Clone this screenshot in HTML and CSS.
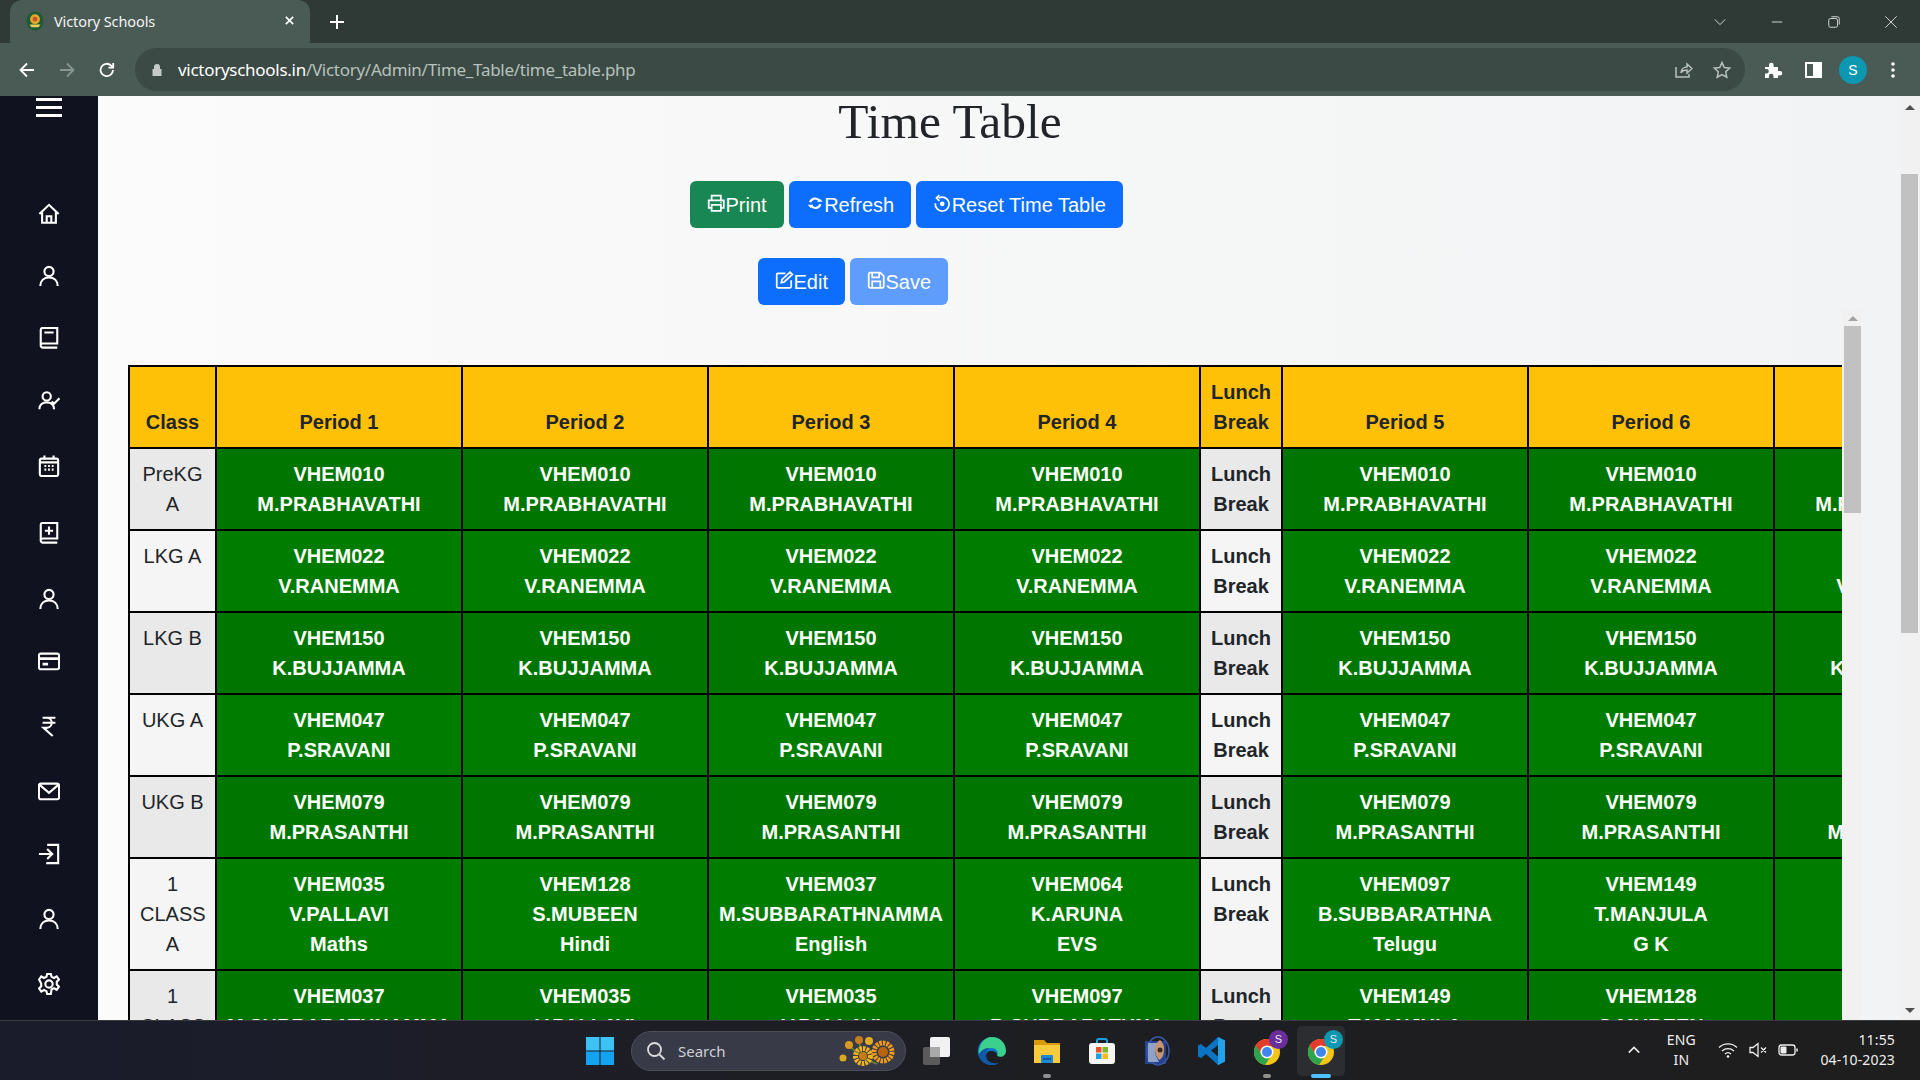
FILE: index.html
```html
<!DOCTYPE html>
<html lang="en">
<head>
    <meta charset="UTF-8">
    <title>Victory Schools</title>
    <link rel="stylesheet" href="styles.css">
</head>
<body>
    <!-- browser tabs -->
    <div class="tabstrip">
        <div class="tab">
            <svg class="favicon" viewBox="0 0 20 22"><ellipse cx="10" cy="11" rx="9.5" ry="10.5" fill="#1d5a36"/><circle cx="10" cy="9" r="5.5" fill="#e2a62c"/><circle cx="10" cy="9" r="2.6" fill="#c9532c"/><path d="M4 15h12l-2 3H6z" fill="#e8d25a"/></svg>
            <span class="tab-title">Victory Schools</span>
            <svg class="tab-close" viewBox="0 0 12 12"><path d="M2 2l8 8M10 2l-8 8"/></svg>
        </div>
        <svg class="new-tab" viewBox="0 0 16 16"><path d="M8 1v14M1 8h14"/></svg>
        <div class="win-controls">
            <svg viewBox="0 0 16 16"><path d="M2 5l6 6 6-6"/></svg>
            <svg viewBox="0 0 16 16"><path d="M2 8h12"/></svg>
            <svg viewBox="0 0 16 16"><rect x="2" y="4" width="10" height="10" rx="2"/><path d="M5 2h7a2 2 0 0 1 2 2v7"/></svg>
            <svg viewBox="0 0 16 16"><path d="M1.500 1.500l13 13M14.500 1.500l-13 13"/></svg>
        </div>
    </div>

    <!-- address bar -->
    <div class="toolbar">
        <svg class="tool-icon" viewBox="0 0 20 20"><path d="M17 10H4M10 3.500L3.500 10l6.500 6.500"/></svg>
        <svg class="tool-icon dim" viewBox="0 0 20 20"><path d="M3 10h13M10 3.500l6.500 6.500-6.500 6.500"/></svg>
        <svg class="tool-icon" viewBox="0 0 20 20"><path d="M16 10a6.200 6.200 0 1 1-1.800-4.400L16 7.500M16.200 3v4.700h-4.700"/></svg>
        <div class="address">
            <svg class="lock" viewBox="0 0 12 14"><path d="M3 6V4a3 3 0 0 1 6 0v2h1.500v7h-9V6z" fill="#c3cac7"/></svg>
            <span class="url"><b>victoryschools.in</b>/Victory/Admin/Time_Table/time_table.php</span>
            <svg class="addr-icon" viewBox="0 0 20 20"><path d="M3 7v10h13v-3M8 13c0-4 3-6 6-6V4l5 4.500-5 4.500v-3c-3 0-5 1-6 3z"/></svg>
            <svg class="addr-icon" viewBox="0 0 20 20"><path d="M10 2.500l2.300 5 5.400.6-4 3.700 1.100 5.400-4.800-2.700-4.800 2.700 1.100-5.400-4-3.700 5.400-.6z"/></svg>
        </div>
        <div class="ext-btn"><svg viewBox="0 0 20 20"><path d="M2 7h4V5a2.300 2.300 0 0 1 4.600 0v2h4.400v4h2a2.300 2.300 0 0 1 0 4.600h-2V18H10.500v-2a2.300 2.300 0 0 0-4.600 0v2H2v-4.500h1.500a2.300 2.300 0 0 0 0-4.600H2z" fill="#fff"/></svg></div>
        <div class="ext-btn"><svg viewBox="0 0 20 20"><path fill-rule="evenodd" d="M2 2h17v16H2zM4 4v12h6V4z" fill="#fff"/></svg></div>
        <div class="ext-btn"><span class="avatar">S</span></div>
        <div class="ext-btn"><svg viewBox="0 0 20 20"><circle cx="10" cy="4" r="1.800" fill="#fff"/><circle cx="10" cy="10" r="1.800" fill="#fff"/><circle cx="10" cy="16" r="1.800" fill="#fff"/></svg></div>
    </div>

    <div class="window">
        <!-- side menu -->
        <aside class="sidebar">
            <div class="burger"><span></span><span></span><span></span></div>
            <nav class="side-nav">
                <svg viewBox="0 0 24 24"><path d="M1.500 12L12 2l10.500 10M4.500 10v11.500h15V10M9.500 21.500v-7h5v7"/></svg>
                <svg viewBox="0 0 24 24"><circle cx="12" cy="7" r="5"/><path d="M2.500 23c0-6 4-9.500 9.500-9.500s9.500 3.500 9.500 9.500"/></svg>
                <svg viewBox="0 0 24 24"><path d="M3 19V3a2 2 0 0 1 2-2h16v17H5a2.500 2.500 0 0 0-2 1.500A2.500 2.500 0 0 0 5 22.500h16M7 6h10"/></svg>
                <svg viewBox="0 0 24 24"><circle cx="9.500" cy="7" r="4.500"/><path d="M1.500 21c0-5 3.500-7.500 8-7.500s8 2.500 8 7.500M15 12.500l2.500 2.500 6-6"/></svg>
                <svg viewBox="0 0 24 24"><rect x="2" y="4" width="20" height="19" rx="2"/><path d="M7 0.500v4M17 0.500v4M2 8h20M7 12h2M11 12h2M15 12h2M7 16h2M11 16h2M15 16h2"/></svg>
                <svg viewBox="0 0 24 24"><path d="M3 19V3a2 2 0 0 1 2-2h16v17H5a2.500 2.500 0 0 0-2 1.500A2.500 2.500 0 0 0 5 22.500h16M12 5v9M7.500 9.500h9"/></svg>
                <svg viewBox="0 0 24 24"><circle cx="12" cy="7" r="5"/><path d="M2.500 23c0-6 4-9.500 9.500-9.500s9.500 3.500 9.500 9.500"/></svg>
                <svg viewBox="0 0 24 24"><rect x="1" y="4" width="22" height="17" rx="2"/><path d="M1 9.500h22M5 15.500h6" stroke-width="3"/></svg>
                <svg viewBox="0 0 24 24"><path d="M5 3h14M5 8.500h14M5 3h4.500a5.500 5.500 0 0 1 0 11H6l10 9"/></svg>
                <svg viewBox="0 0 24 24"><rect x="1" y="4" width="22" height="17" rx="2"/><path d="M1.500 5l10.500 9 10.500-9"/></svg>
                <svg viewBox="0 0 24 24"><path d="M10 2h12v20H10v-1M1 12h14M10 6.500l5.500 5.500-5.500 5.500"/></svg>
                <svg viewBox="0 0 24 24"><circle cx="12" cy="7" r="5"/><path d="M2.500 23c0-6 4-9.500 9.500-9.500s9.500 3.500 9.500 9.500"/></svg>
                <svg viewBox="0 0 24 24"><circle cx="12" cy="12" r="4"/><path d="M10 1h4l.8 3.200 2.700 1.200 2.900-1.700 2.400 3.400-2.300 2.400v3l2.300 2.400-2.400 3.400-2.900-1.700-2.700 1.200L14 23h-4l-.8-3.200-2.700-1.200-2.900 1.700-2.400-3.400 2.300-2.400v-3L1.200 7.100l2.400-3.400 2.900 1.700 2.700-1.200z"/></svg>
            </nav>
        </aside>

        <main class="content">
            <h1 class="page-title">Time Table</h1>
            <div class="btn-row first">
                <button class="btn green"><svg viewBox="0 0 16 16"><path d="M4 5V1.500h8V5M4 12H1.500V5.500h13V12H12M4 9.500h8v5H4zM11.500 7.500h1"/></svg>Print</button>
                <button class="btn blue"><svg viewBox="-2 -2 20 20"><path class="thick" d="M2.500 7a5.500 5.500 0 0 1 10-1.500M13.500 9a5.500 5.500 0 0 1-10 1.500"/><path class="solid" d="M10 6.500h6l-3-3.500zM6 9.500H0l3 3.500z"/></svg>Refresh</button>
                <button class="btn blue"><svg viewBox="0 0 16 16"><path d="M5 3.500a6 6 0 1 1-3 4.500M5.500 1L3 3.500 5.500 6"/><circle class="solid" cx="8" cy="8.500" r="2"/></svg>Reset Time Table</button>
            </div>
            <div class="btn-row second">
                <button class="btn blue"><svg viewBox="0 0 16 16"><path d="M14 8v5.500a1 1 0 0 1-1 1H2.500a1 1 0 0 1-1-1V3a1 1 0 0 1 1-1H9M6 7.500l7-6.500 2 2-7 6.500-2.500.5z"/></svg>Edit</button>
                <button class="btn blue faded"><svg viewBox="0 0 16 16"><path d="M1.500 2.500a1 1 0 0 1 1-1h9l3 3v9a1 1 0 0 1-1 1h-11a1 1 0 0 1-1-1zM4.500 1.500v4h6v-4M4.500 14.500v-5.500h7v5.500"/></svg>Save</button>
            </div>

            <div class="table-area">
                <div class="table-clip">
                    <table class="timetable">
                        <colgroup>
                            <col class="c-class"><col class="c-period"><col class="c-period"><col class="c-period"><col class="c-period"><col class="c-lunch"><col class="c-period"><col class="c-period"><col class="c-period">
                        </colgroup>
                        <thead>
                            <tr><th>Class</th><th>Period 1</th><th>Period 2</th><th>Period 3</th><th>Period 4</th><th>Lunch Break</th><th>Period 5</th><th>Period 6</th><th>Period 7</th></tr>
                        </thead>
                        <tbody>
                            <tr>
                                <td>PreKG A</td>
                                <td class="slot">VHEM010<br>M.PRABHAVATHI</td><td class="slot">VHEM010<br>M.PRABHAVATHI</td><td class="slot">VHEM010<br>M.PRABHAVATHI</td><td class="slot">VHEM010<br>M.PRABHAVATHI</td>
                                <td class="lunch">Lunch Break</td>
                                <td class="slot">VHEM010<br>M.PRABHAVATHI</td><td class="slot">VHEM010<br>M.PRABHAVATHI</td><td class="slot">VHEM010<br>M.PRABHAVATHI</td>
                            </tr>
                            <tr>
                                <td>LKG A</td>
                                <td class="slot">VHEM022<br>V.RANEMMA</td><td class="slot">VHEM022<br>V.RANEMMA</td><td class="slot">VHEM022<br>V.RANEMMA</td><td class="slot">VHEM022<br>V.RANEMMA</td>
                                <td class="lunch">Lunch Break</td>
                                <td class="slot">VHEM022<br>V.RANEMMA</td><td class="slot">VHEM022<br>V.RANEMMA</td><td class="slot">VHEM022<br>V.RANEMMA</td>
                            </tr>
                            <tr>
                                <td>LKG B</td>
                                <td class="slot">VHEM150<br>K.BUJJAMMA</td><td class="slot">VHEM150<br>K.BUJJAMMA</td><td class="slot">VHEM150<br>K.BUJJAMMA</td><td class="slot">VHEM150<br>K.BUJJAMMA</td>
                                <td class="lunch">Lunch Break</td>
                                <td class="slot">VHEM150<br>K.BUJJAMMA</td><td class="slot">VHEM150<br>K.BUJJAMMA</td><td class="slot">VHEM150<br>K.BUJJAMMA</td>
                            </tr>
                            <tr>
                                <td>UKG A</td>
                                <td class="slot">VHEM047<br>P.SRAVANI</td><td class="slot">VHEM047<br>P.SRAVANI</td><td class="slot">VHEM047<br>P.SRAVANI</td><td class="slot">VHEM047<br>P.SRAVANI</td>
                                <td class="lunch">Lunch Break</td>
                                <td class="slot">VHEM047<br>P.SRAVANI</td><td class="slot">VHEM047<br>P.SRAVANI</td><td class="slot">VHEM047<br>P.SRAVANI</td>
                            </tr>
                            <tr>
                                <td>UKG B</td>
                                <td class="slot">VHEM079<br>M.PRASANTHI</td><td class="slot">VHEM079<br>M.PRASANTHI</td><td class="slot">VHEM079<br>M.PRASANTHI</td><td class="slot">VHEM079<br>M.PRASANTHI</td>
                                <td class="lunch">Lunch Break</td>
                                <td class="slot">VHEM079<br>M.PRASANTHI</td><td class="slot">VHEM079<br>M.PRASANTHI</td><td class="slot">VHEM079<br>M.PRASANTHI</td>
                            </tr>
                            <tr>
                                <td>1 CLASS A</td>
                                <td class="slot">VHEM035<br>V.PALLAVI<br>Maths</td><td class="slot">VHEM128<br>S.MUBEEN<br>Hindi</td><td class="slot">VHEM037<br>M.SUBBARATHNAMMA<br>English</td><td class="slot">VHEM064<br>K.ARUNA<br>EVS</td>
                                <td class="lunch">Lunch Break</td>
                                <td class="slot">VHEM097<br>B.SUBBARATHNA<br>Telugu</td><td class="slot">VHEM149<br>T.MANJULA<br>G K</td><td class="slot">VHEM064<br>K.ARUNA<br>EVS</td>
                            </tr>
                            <tr>
                                <td>1 CLASS B</td>
                                <td class="slot">VHEM037<br>M.SUBBARATHNAMMA<br>English</td><td class="slot">VHEM035<br>V.PALLAVI<br>Maths</td><td class="slot">VHEM035<br>V.PALLAVI<br>Maths</td><td class="slot">VHEM097<br>B.SUBBARATHNA<br>Telugu</td>
                                <td class="lunch">Lunch Break</td>
                                <td class="slot">VHEM149<br>T.MANJULA<br>G K</td><td class="slot">VHEM128<br>S.MUBEEN<br>Hindi</td><td class="slot">VHEM064<br>K.ARUNA<br>EVS</td>
                            </tr>
                        </tbody>
                    </table>
                </div>
                <div class="inner-bar">
                    <div class="arrow-up"></div>
                    <div class="inner-thumb"></div>
                </div>
            </div>
        </main>

        <div class="page-bar">
            <div class="arrow-up dark"></div>
            <div class="page-thumb"></div>
            <div class="arrow-down"></div>
        </div>
    </div>

    <!-- windows taskbar -->
    <footer class="taskbar">
        <div class="task"><svg viewBox="0 0 30 30"><path fill="#3cc2f5" d="M1 1h13.500v13.500H1zM15.500 1H29v13.500H15.500z"/><path fill="#14a4ef" d="M1 15.500h13.500V29H1zM15.500 15.500H29V29H15.500z"/></svg></div>
        <div class="search">
            <svg class="search-glass" viewBox="0 0 20 20"><circle cx="8.500" cy="8.500" r="6.500"/><path d="M13.500 13.500l5 5"/></svg>
            <span>Search</span>
            <svg class="flowers" viewBox="0 0 60 34">
                <path d="M8 10l16 14 14 6M20 8l4 16" stroke="#6a8a3a" stroke-width="1.500" fill="none"/>
                <circle cx="10" cy="11" r="4" fill="#d99a1f"/><circle cx="20" cy="6" r="4" fill="#c77a1e"/><circle cx="30" cy="7" r="4" fill="#e3ab22"/>
                <circle class="petals" cx="24" cy="22" r="7.500" stroke="#f0b41c"/><circle cx="24" cy="22" r="4" fill="#c87a14"/>
                <circle class="petals" cx="44" cy="18" r="9" stroke="#f09a18"/><circle cx="44" cy="18" r="5" fill="#b9650f"/>
                <circle cx="4" cy="24" r="3.500" fill="#dca91e"/>
            </svg>
        </div>
        <div class="task first-app"><svg viewBox="0 0 30 30"><rect x="1" y="11" width="17" height="18" rx="2" fill="#5b5b5b"/><rect x="8" y="1" width="20" height="20" rx="2" fill="#f2f2f2"/><rect x="8" y="11" width="10" height="10" fill="#a9a9a9"/></svg></div>
        <div class="task"><svg viewBox="0 0 30 30"><path fill="#1173c9" d="M15 1a14 14 0 1 0 7 26c-6 2-13-1-13-7 0-3 2-5 5-5 4 0 6 2 6 4h7C28 8 23 1 15 1z"/><path fill="#3bd08c" d="M15 1C23 1 29 7 29 15c0 5-5 7-9 5 2-3 0-8-6-8-5 0-10 3-12 7C1 9 7 1 15 1z"/><path fill="#0f5aa8" d="M9 20c0 6 7 9 13 7-8 5-20 0-20-9 3-5 7-6 10-6-2 2-3 5-3 8z"/></svg></div>
        <div class="task marked"><svg viewBox="0 0 30 30"><path fill="#d99a0c" d="M2 4h10l3 3h13v5H2z"/><path fill="#f8cb3c" d="M2 9h26v18H2z"/><rect x="9" y="19" width="12" height="8" rx="1" fill="#1f88d6"/><path d="M11 23h8" stroke="#0c4f90" stroke-width="1.500"/></svg></div>
        <div class="task"><svg viewBox="0 0 30 30"><path d="M10 8V5a2 2 0 0 1 2-2h6a2 2 0 0 1 2 2v3" fill="none" stroke="#1aa0e0" stroke-width="2"/><rect x="2" y="7" width="26" height="21" rx="3" fill="#f5f5f5"/><rect x="9" y="11" width="5.500" height="5.500" fill="#e8502b"/><rect x="15.500" y="11" width="5.500" height="5.500" fill="#7cb82f"/><rect x="9" y="17.500" width="5.500" height="5.500" fill="#1fa1e0"/><rect x="15.500" y="17.500" width="5.500" height="5.500" fill="#f7b916"/></svg></div>
        <div class="task"><svg viewBox="0 0 30 30"><rect x="3" y="5" width="21" height="23" fill="#27418f"/><ellipse cx="16" cy="15" rx="11" ry="14" fill="none" stroke="#3a5aa8" stroke-width="1.500"/><path d="M6 7h11c-4 3-5 8-3 13l3 6H6z" fill="#8fa3c8"/><path d="M18 4c-5 3-6 9-4 15l3 5c4-2 5-6 5-11s-2-7-4-9z" fill="#c69672"/><circle cx="18" cy="14" r="2.500" fill="#3a2a1c"/></svg></div>
        <div class="task"><svg viewBox="0 0 30 30"><path fill="#0b74c4" d="M21 1l7 3.500v21L21 29 9 18l-5 4-3-1.500V9.500L4 8l5 4zM21 9l-7 5.500 7 6z"/><path fill="#23a2ea" d="M21 1l7 3.500v21L21 29z"/></svg></div>
        <div class="task marked">
            <svg viewBox="0 0 30 30"><circle cx="15" cy="16" r="13" fill="#f5c518"/><path d="M15 3a13 13 0 0 0-11.300 6.500L10 20a6 6 0 0 1 5-10h12A13 13 0 0 0 15 3z" fill="#e33b2e"/><path d="M3.700 9.500A13 13 0 0 0 13 28.900L19 20a6 6 0 0 1-9-1z" fill="#2da44e"/><circle cx="15" cy="16" r="6.500" fill="#fff"/><circle cx="15" cy="16" r="5" fill="#3f86ec"/></svg>
            <span class="badge purple">S</span>
        </div>
        <div class="task active">
            <svg viewBox="0 0 30 30"><circle cx="15" cy="16" r="13" fill="#f5c518"/><path d="M15 3a13 13 0 0 0-11.300 6.500L10 20a6 6 0 0 1 5-10h12A13 13 0 0 0 15 3z" fill="#e33b2e"/><path d="M3.700 9.500A13 13 0 0 0 13 28.900L19 20a6 6 0 0 1-9-1z" fill="#2da44e"/><circle cx="15" cy="16" r="6.500" fill="#fff"/><circle cx="15" cy="16" r="5" fill="#3f86ec"/></svg>
            <span class="badge teal">S</span>
        </div>
        <div class="tray">
            <svg class="tray-chevron" viewBox="0 0 16 16"><path d="M2 11l6-6 6 6"/></svg>
            <div class="lang">ENG<br>IN</div>
            <svg class="tray-icon" viewBox="0 0 20 20"><path d="M1 7.500a13 13 0 0 1 18 0M4 11a9 9 0 0 1 12 0M7 14a4.500 4.500 0 0 1 6 0"/><circle class="solid" cx="10" cy="16.500" r="1.300"/></svg>
            <svg class="tray-icon" viewBox="0 0 20 20"><path d="M2 7.500v5h3l5 4v-13l-5 4zM13 7.500l5 5M18 7.500l-5 5"/></svg>
            <svg class="tray-icon" viewBox="0 0 20 20"><rect x="1" y="5" width="16" height="10" rx="2.500"/><rect class="solid" x="2.500" y="6.500" width="6" height="7" rx="1"/><path d="M19 8.500v3" stroke-width="1.500"/></svg>
            <div class="clock">11:55<br>04-10-2023</div>
        </div>
    </footer>
</body>
</html>
```

FILE: styles.css
```css
* {
    box-sizing: border-box;
}
html, body {
    margin: 0;
    height: 100%;
}
body {
    display: flex;
    flex-direction: column;
    height: 1080px;
    overflow: hidden;
    font-family: "Liberation Sans", Arial, sans-serif;
    color: #212529;
}

/* browser tabs */
.tabstrip {
    height: 43px;
    flex: none;
    display: flex;
    align-items: flex-end;
    padding-left: 10px;
    background-color: #2f3a37;
}
.tab {
    width: 300px;
    height: 43px;
    display: flex;
    align-items: center;
    padding: 0 15px 2px 16px;
    border-radius: 12px 12px 0 0;
    background-color: #4a5b55;
}
.favicon {
    width: 18px;
    height: 20px;
    flex: none;
}
.tab-title {
    margin-left: 10px;
    font-family: "Noto Sans", sans-serif;
    font-size: 14.5px;
    letter-spacing: -0.1px;
    color: #f2f4f3;
}
.tab-close {
    width: 11px;
    height: 11px;
    margin-left: auto;
    fill: none;
    stroke: #fff;
    stroke-width: 1.8;
}
.new-tab {
    width: 16px;
    height: 16px;
    margin: 0 0 13px 19px;
    fill: none;
    stroke: #fff;
    stroke-width: 2;
}
.win-controls {
    margin-left: auto;
    height: 43px;
    display: flex;
    align-items: center;
    gap: 43px;
    padding-right: 22px;
}
.win-controls svg {
    width: 14px;
    height: 14px;
    fill: none;
    stroke: #e4e8e6;
    stroke-width: 1;
}

/* address bar */
.toolbar {
    height: 53px;
    flex: none;
    display: flex;
    align-items: center;
    padding: 0 7px;
    background-color: #4a5b55;
}
.tool-icon {
    width: 40px;
    height: 20px;
    flex: none;
    fill: none;
    stroke: #fff;
    stroke-width: 1.8;
}
.tool-icon.dim {
    stroke: #89958f;
}
.address {
    flex: 1;
    height: 43px;
    margin: 0 8px;
    display: flex;
    align-items: center;
    padding-left: 16px;
    border-radius: 22px;
    background-color: #3c4a45;
}
.lock {
    width: 12px;
    height: 14px;
    flex: none;
}
.url {
    margin-left: 15px;
    font-family: "Noto Sans", sans-serif;
    font-size: 17px;
    letter-spacing: -0.28px;
    color: #b7c1bd;
}
.url b {
    font-weight: 400;
    color: #fff;
}
.addr-icon {
    width: 20px;
    height: 20px;
    flex: none;
    margin-right: 19px;
    fill: none;
    stroke: #b9c1be;
    stroke-width: 1.5;
}
.addr-icon:last-child {
    margin-right: 13px;
}
.url + .addr-icon {
    margin-left: auto;
}
.ext-btn {
    width: 40px;
    height: 40px;
    flex: none;
    display: flex;
    align-items: center;
    justify-content: center;
}
.ext-btn svg {
    width: 20px;
    height: 20px;
}
.avatar {
    width: 28px;
    height: 28px;
    display: flex;
    align-items: center;
    justify-content: center;
    border-radius: 50%;
    background-color: #0b98b0;
    color: #fff;
    font-size: 14px;
}

/* page area */
.window {
    flex: 1;
    min-height: 0;
    display: flex;
}
.sidebar {
    width: 98px;
    flex: none;
    background-color: #10121f;
}
.burger {
    width: 26px;
    margin: 2px auto 0;
    display: flex;
    flex-direction: column;
    gap: 5px;
}
.burger span {
    height: 3px;
    background-color: #fff;
}
.side-nav {
    margin-top: 86px;
    display: grid;
    grid-template-rows: 62px 62px 63px 65px 67px 66px 62px 65px 65px 63px 65px 65px 22px;
    justify-items: center;
}
.side-nav svg {
    width: 22px;
    height: 22px;
    fill: none;
    stroke: #fff;
    stroke-width: 2.300;
}

.content {
    flex: 1;
    min-width: 0;
    overflow: hidden;
    background: linear-gradient(90deg, #fbfbfb, #f2f3f4);
}
.page-title {
    width: 1704px;
    margin: 0;
    font-family: "Liberation Serif", "Times New Roman", serif;
    font-size: 49.5px;
    line-height: 52px;
    font-weight: 400;
    text-align: center;
}
.btn-row {
    display: flex;
    gap: 5px;
}
.btn-row.first {
    margin: 33px 0 0 592px;
}
.btn-row.second {
    margin: 30px 0 0 660px;
}
.btn {
    display: flex;
    align-items: center;
    height: 47px;
    padding: 1px 16px 0;
    border: 1px solid transparent;
    border-radius: 6px;
    font-family: inherit;
    font-size: 20px;
    line-height: 29px;
    color: #fff;
}
.btn svg {
    width: 18.5px;
    height: 18.5px;
    margin-top: -3px;
    fill: none;
    stroke: #fff;
    stroke-width: 1.5;
}
.btn .thick {
    stroke-width: 2.400;
}
.btn .solid {
    fill: #fff;
    stroke: none;
}
.green {
    background-color: #198754;
}
.blue {
    background-color: #0d6efd;
}
.faded {
    opacity: 0.65;
}

/* table with its own scrollbar */
.table-area {
    margin: 5px 0 0 30px;
    display: flex;
}
.table-clip {
    width: 1714px;
    padding-top: 55px;
    overflow: hidden;
}
.timetable {
    width: 1893px;
    table-layout: fixed;
    border-collapse: collapse;
    font-size: 20px;
    line-height: 30px;
    text-align: center;
}
.c-class {
    width: 87px;
}
.c-period {
    width: 246px;
}
.c-lunch {
    width: 82px;
}
.timetable th, .timetable td {
    padding: 10px;
    border: 2px solid #000;
}
.timetable th {
    vertical-align: bottom;
    background-color: #ffc107;
}
.timetable td {
    vertical-align: top;
    background-color: #f5f5f5;
}
.timetable tbody tr:nth-child(odd) td {
    background-color: #e9e9e9;
}
.timetable td.lunch {
    font-weight: 700;
}
.timetable td.slot {
    padding-left: 0;
    padding-right: 0;
    font-weight: 700;
    color: #fff;
    background-color: #007d00;
}
.timetable tbody tr:nth-child(odd) td.slot {
    background-color: #007600;
}
.inner-bar {
    width: 19px;
    padding-left: 2px;
    background-color: #f1f1f1;
}
.arrow-up {
    width: 0;
    margin: 6px auto 0;
    border: 5px solid transparent;
    border-top-width: 0;
    border-bottom-color: #a3a3a3;
}
.inner-thumb {
    height: 187px;
    margin-top: 5px;
    background-color: #c1c1c1;
}
.page-bar {
    width: 20px;
    flex: none;
    position: relative;
    padding: 0 2px 0 1px;
    background-color: #f1f1f1;
}
.arrow-up.dark {
    margin-top: 9px;
    border-bottom-color: #505050;
}
.page-thumb {
    height: 459px;
    margin-top: 64px;
    background-color: #c1c1c1;
}
.arrow-down {
    width: 0;
    position: absolute;
    left: 5px;
    bottom: 7px;
    border: 5px solid transparent;
    border-bottom-width: 0;
    border-top-color: #505050;
}

/* windows taskbar */
.taskbar {
    height: 60px;
    flex: none;
    display: flex;
    align-items: center;
    padding-left: 572px;
    border-top: 1px solid #3a3b3d;
    background: linear-gradient(90deg, #1a1c2c, #1d1e24 40%, #1e1e1e);
}
.task {
    width: 55px;
    height: 50px;
    flex: none;
    position: relative;
    display: flex;
    align-items: center;
    justify-content: center;
}
.task svg {
    width: 30px;
    height: 30px;
}
.search {
    width: 275px;
    height: 40px;
    flex: none;
    margin-left: 4px;
    display: flex;
    align-items: center;
    padding-left: 14px;
    border: 1px solid #4c4e58;
    border-radius: 20px;
    background-color: #383a48;
    font-family: "Noto Sans", sans-serif;
    font-size: 15px;
    color: #cfd0d4;
}
.search-glass {
    width: 20px;
    height: 20px;
    margin-right: 12px;
    fill: none;
    stroke: #dcdcdc;
    stroke-width: 1.8;
}
.flowers {
    width: 60px;
    height: 34px;
    margin-left: auto;
    margin-right: 6px;
}
.petals {
    fill: none;
    stroke-width: 5;
    stroke-dasharray: 2.500 1;
}
.first-app {
    margin-left: 3px;
}
.marked::after, .active::after {
    content: "";
    position: absolute;
    left: 50%;
    bottom: -2px;
    width: 8px;
    height: 4px;
    margin-left: -4px;
    border-radius: 2px;
    background-color: #8f8f8f;
}
.active {
    width: 48px;
    margin-left: 3px;
    border-radius: 5px;
    background-color: #2c2d31;
}
.active::after {
    width: 20px;
    margin-left: -10px;
    background-color: #4cc2ff;
}
.badge {
    position: absolute;
    top: 4px;
    right: 6px;
    width: 19px;
    height: 19px;
    display: flex;
    align-items: center;
    justify-content: center;
    border-radius: 50%;
    color: #e8e8e8;
    font-size: 11px;
}
.purple {
    background-color: #6a2d9c;
}
.teal {
    right: 2px;
    background-color: #0b98b0;
}
.tray {
    margin-left: auto;
    display: flex;
    align-items: center;
    padding: 0 25px 2px 0;
    font-family: "Noto Sans", sans-serif;
    font-size: 14px;
    letter-spacing: 0.15px;
    line-height: 20px;
    color: #eee;
}
.tray-chevron {
    width: 14px;
    height: 14px;
    fill: none;
    stroke: #eee;
    stroke-width: 1.8;
}
.lang {
    width: 50px;
    margin: 0 12px 0 15px;
    text-align: center;
}
.tray-icon {
    width: 20px;
    height: 20px;
    margin-right: 10px;
    fill: none;
    stroke: #eee;
    stroke-width: 1.3;
}
.tray-icon .solid {
    fill: #eee;
    stroke: none;
}
.clock {
    margin-left: 12px;
    text-align: right;
}
```
